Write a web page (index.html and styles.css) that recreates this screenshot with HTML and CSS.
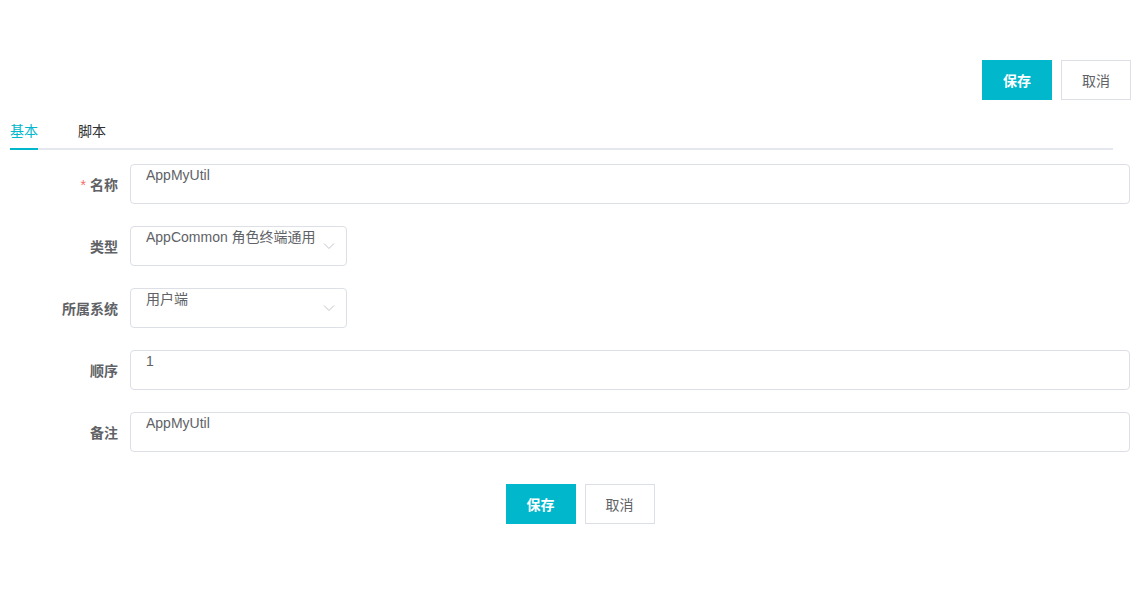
FILE: index.html
```html
<!DOCTYPE html>
<html lang="zh-CN">
<head>
<meta charset="utf-8">
<title>编辑</title>
<link rel="stylesheet" href="styles.css">
</head>
<body>
<div class="page">
  <div class="top-actions">
    <button class="btn btn-primary">保存</button>
    <button class="btn btn-default">取消</button>
  </div>
  <div class="tabs">
    <div class="tab active">基本</div>
    <div class="tab">脚本</div>
  </div>
  <form class="form">
    <div class="row">
      <label class="label"><span class="req">*</span>名称</label>
      <div class="field"><div class="input">AppMyUtil</div></div>
    </div>
    <div class="row">
      <label class="label">类型</label>
      <div class="field"><div class="input select">AppCommon 角色终端通用<svg class="chev" viewBox="0 0 12 8" width="12" height="8"><path d="M1 1.5 L6 6.5 L11 1.5" fill="none" stroke="#c0c4cc" stroke-width="1"/></svg></div></div>
    </div>
    <div class="row">
      <label class="label">所属系统</label>
      <div class="field"><div class="input select">用户端<svg class="chev" viewBox="0 0 12 8" width="12" height="8"><path d="M1 1.5 L6 6.5 L11 1.5" fill="none" stroke="#c0c4cc" stroke-width="1"/></svg></div></div>
    </div>
    <div class="row">
      <label class="label">顺序</label>
      <div class="field"><div class="input">1</div></div>
    </div>
    <div class="row">
      <label class="label">备注</label>
      <div class="field"><div class="input">AppMyUtil</div></div>
    </div>
    <div class="bottom-actions">
      <button type="button" class="btn btn-primary">保存</button>
      <button type="button" class="btn btn-default">取消</button>
    </div>
  </form>
</div>
</body>
</html>
```
FILE: styles.css
```css
html, body {
  margin: 0;
  padding: 0;
  background: #ffffff;
  font-family: "Liberation Sans", "Noto Sans CJK SC", sans-serif;
  font-size: 14px;
  color: #606266;
}
.page {
  padding: 60px 9px 0 10px;
}
.top-actions {
  display: flex;
  justify-content: flex-end;
  gap: 9px;
}
.btn {
  width: 70px;
  height: 40px;
  font-family: inherit;
  font-size: 14px;
  border-radius: 0;
  cursor: pointer;
  padding: 0;
}
.btn-primary {
  background: #00b7cc;
  border: 1px solid #00b7cc;
  color: #ffffff;
  font-weight: bold;
}
.btn-default {
  background: #ffffff;
  border: 1px solid #dcdfe6;
  color: #606266;
}
.tabs {
  display: flex;
  gap: 40px;
  margin: 12px 18px 0 0;
  border-bottom: 2px solid #e4e7ed;
  height: 36px;
}
.tab {
  height: 36px;
  line-height: 38px;
  color: #303133;
  position: relative;
}
.tab.active {
  color: #00b7cc;
}
.tab.active::after {
  content: "";
  position: absolute;
  left: 0;
  right: 0;
  bottom: -2px;
  height: 2px;
  background: #00b7cc;
}
.form {
  margin-top: 14px;
  display: flex;
  flex-direction: column;
  gap: 22px;
  margin-right: 1px;
}
.row {
  display: flex;
  align-items: center;
  height: 40px;
}
.label {
  width: 108px;
  padding-right: 12px;
  text-align: right;
  font-weight: bold;
  color: #606266;
  flex: none;
}
.req {
  color: #f56c6c;
  margin-right: 4px;
  font-weight: normal;
}
.field {
  flex: 1;
}
.input {
  box-sizing: border-box;
  height: 40px;
  border: 1px solid #dcdfe6;
  border-radius: 4px;
  padding: 0 15px;
  line-height: 20px;
  color: #606266;
}
.select {
  width: 217px;
  position: relative;
  padding-right: 30px;
  white-space: nowrap;
}
.chev {
  position: absolute;
  right: 11px;
  top: 15px;
}
.bottom-actions {
  display: flex;
  justify-content: center;
  gap: 9px;
  margin-top: 10px;
  padding-left: 20px;
}
```
